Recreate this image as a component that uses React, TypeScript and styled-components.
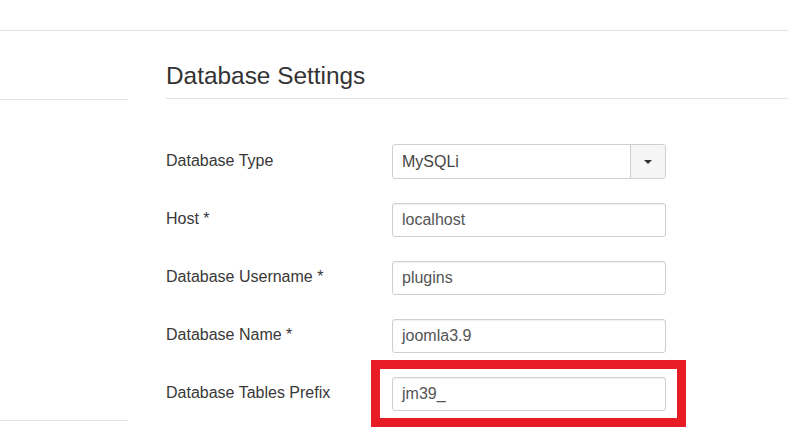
import * as React from 'react';
import styled, { createGlobalStyle } from 'styled-components';

const GlobalStyle = createGlobalStyle`
  html, body {
    margin: 0;
    padding: 0;
    background: #fff;
  }
  body {
    font-family: 'Liberation Sans', Arial, sans-serif;
    color: #333;
  }
`;

const Page = styled.div`
  width: 788px;
  height: 433px;
  overflow: hidden;
  background: #fff;
`;

const TopBar = styled.div`
  height: 30px;
  border-bottom: 1px solid #e3e3e3;
`;

const Body = styled.div`
  display: flex;
  gap: 38px;
`;

const Sidebar = styled.div`
  width: 128px;
  flex-shrink: 0;
  display: flex;
  flex-direction: column;
`;

const SideBlock = styled.div<{ h: number }>`
  height: ${p => p.h}px;
  border-bottom: 1px solid #e3e3e3;
`;

const Main = styled.div`
  flex: 1;
  display: flex;
  flex-direction: column;
`;

const Heading = styled.div`
  height: 68px;
  box-sizing: border-box;
  display: flex;
  align-items: flex-end;
  padding-bottom: 8px;
  border-bottom: 1px solid #e3e3e3;
`;

const Title = styled.h2`
  margin: 0;
  font-size: 24.4px;
  font-weight: 400;
  line-height: 1.2;
  color: #333;
`;

const Form = styled.div`
  display: flex;
  flex-direction: column;
  gap: 23px;
  margin-top: 45px;
`;

const Row = styled.div`
  display: flex;
  align-items: center;
  height: 35px;
`;

const Label = styled.label`
  width: 226px;
  flex-shrink: 0;
  font-size: 16px;
  color: #383838;
  line-height: 1;
  margin-top: -1px;
`;

const Field = styled.div`
  position: relative;
  width: 274px;
  height: 34px;
`;

const TextBox = styled.div`
  box-sizing: border-box;
  width: 100%;
  height: 100%;
  border: 1px solid #cfcfcf;
  border-radius: 3px;
  box-shadow: inset 0 1px 1px rgba(0, 0, 0, 0.06);
  display: flex;
  align-items: center;
  padding: 0 9px;
  font-size: 16px;
  color: #555;
  background: #fff;
`;

const SelectBox = styled.div`
  box-sizing: border-box;
  width: 274px;
  height: 35px;
  border: 1px solid #cfcfcf;
  border-radius: 3px;
  display: flex;
  overflow: hidden;
  background: #fff;
`;

const SelectValue = styled.div`
  flex: 1;
  display: flex;
  align-items: center;
  padding: 0 9px;
  font-size: 16px;
  color: #444;
`;

const SelectButton = styled.div`
  width: 34px;
  border-left: 1px solid #cfcfcf;
  background: #f5f5f5;
  display: flex;
  align-items: center;
  justify-content: center;
`;

const Caret = styled.span`
  width: 0;
  height: 0;
  border-left: 4px solid transparent;
  border-right: 4px solid transparent;
  border-top: 4px solid #333;
`;

const Highlight = styled.div`
  position: absolute;
  left: -21px;
  top: -17px;
  right: -20px;
  bottom: -16px;
  border: 9px solid #e81c24;
  pointer-events: none;
`;

const fields = [
  { label: 'Host *', value: 'localhost' },
  { label: 'Database Username *', value: 'plugins' },
  { label: 'Database Name *', value: 'joomla3.9' },
  { label: 'Database Tables Prefix', value: 'jm39_', marked: true },
];

export default function App() {
  return (
    <Page>
      <GlobalStyle />
      <TopBar />
      <Body>
        <Sidebar>
          <SideBlock h={68} />
          <SideBlock h={320} />
        </Sidebar>
        <Main>
          <Heading>
            <Title>Database Settings</Title>
          </Heading>
          <Form>
            <Row>
              <Label>Database Type</Label>
              <SelectBox>
                <SelectValue>MySQLi</SelectValue>
                <SelectButton>
                  <Caret />
                </SelectButton>
              </SelectBox>
            </Row>
            {fields.map(f => (
              <Row key={f.label}>
                <Label>{f.label}</Label>
                <Field>
                  <TextBox>{f.value}</TextBox>
                  {f.marked && <Highlight />}
                </Field>
              </Row>
            ))}
          </Form>
        </Main>
      </Body>
    </Page>
  );
}
